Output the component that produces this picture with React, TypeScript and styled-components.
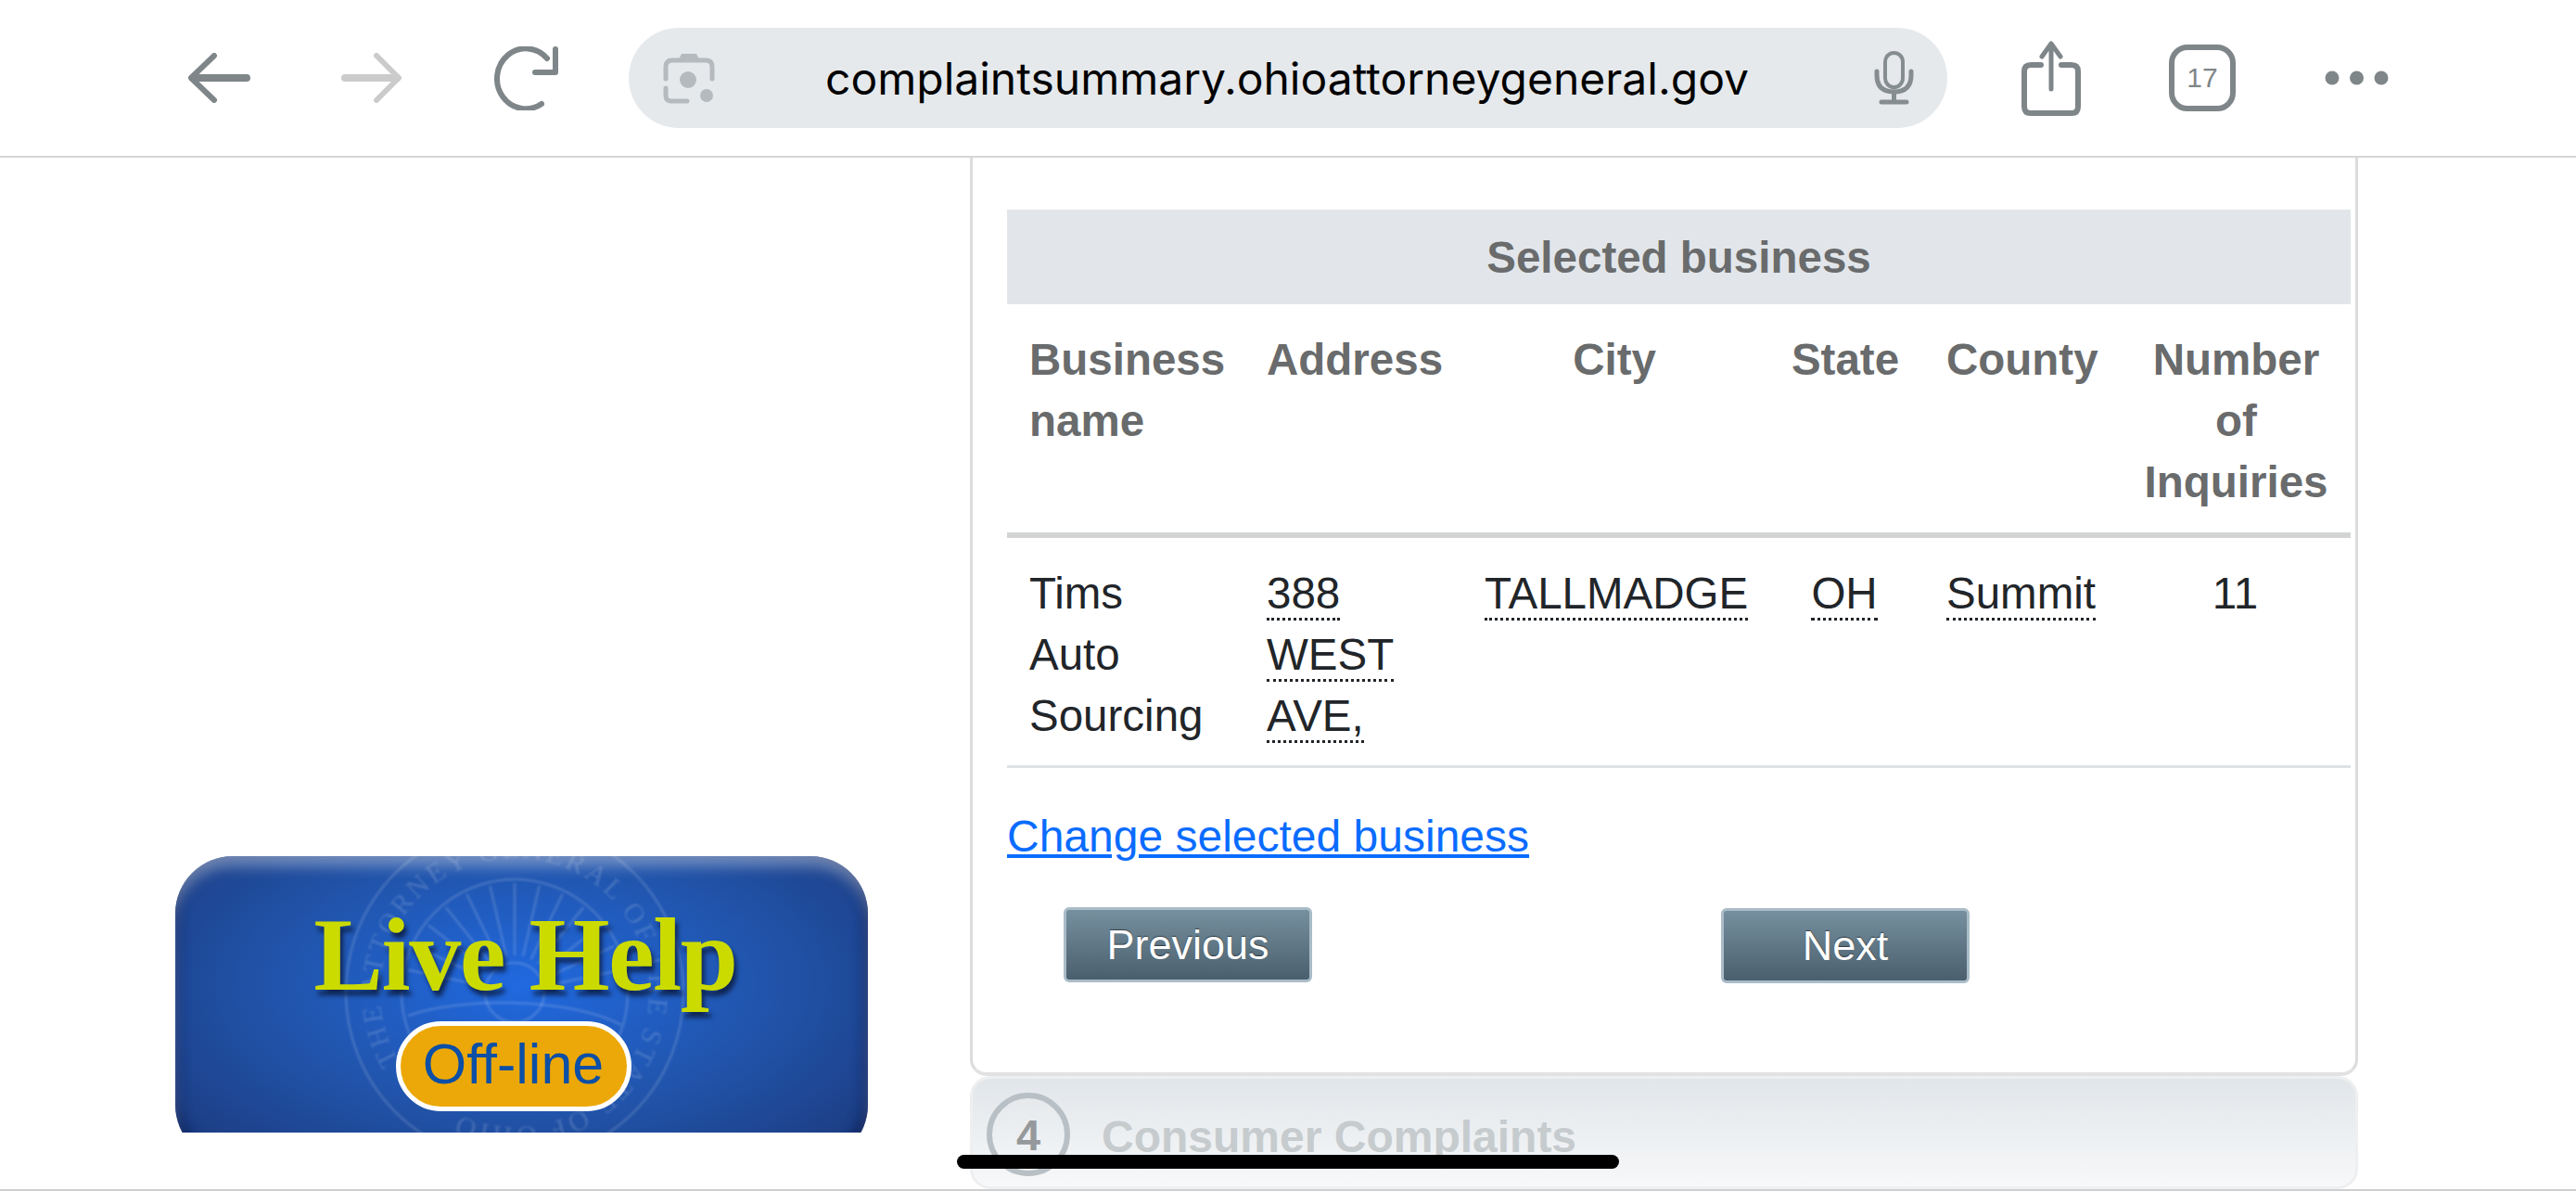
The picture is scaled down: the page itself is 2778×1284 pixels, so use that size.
import * as React from "react";
import styled, { createGlobalStyle } from "styled-components";

const GlobalStyle = createGlobalStyle`
  html, body {
    margin: 0;
    height: 1284px;
    overflow: hidden;
    background: #fff;
    font-family: "Liberation Sans", Arial, sans-serif;
    color: #212529;
  }
`;

const Screen = styled.div`
  position: relative;
  width: 2778px;
  height: 1284px;
  box-sizing: border-box;
  overflow: hidden;
  display: flex;
  flex-direction: column;
  border-bottom: 2px solid #cfcfcf;
`;

const Toolbar = styled.div`
  height: 168px;
  flex: none;
  display: flex;
  align-items: center;
  padding-left: 202px;
  border-bottom: 2px solid #d6d6d6;
`;

const ToolIcon = styled.svg<{ $gap?: number }>`
  flex: none;
  margin-left: ${p => p.$gap || 0}px;
  display: block;
`;

const AddressBar = styled.div`
  width: 1422px;
  height: 108px;
  margin-left: 76px;
  flex: none;
  box-sizing: border-box;
  padding: 0 36px 0 37px;
  border-radius: 54px;
  background: #e6e9ec;
  display: flex;
  align-items: center;
`;

const Url = styled.div`
  flex: 1;
  padding-right: 16px;
  text-align: center;
  font-family: Inter, "Liberation Sans", sans-serif;
  font-size: 48px;
  color: #000;
  white-space: nowrap;
`;

const TabCount = styled.div`
  width: 72px;
  height: 72px;
  margin-left: 95px;
  flex: none;
  box-sizing: border-box;
  border: 6px solid #7f8689;
  border-radius: 20px;
  display: flex;
  align-items: center;
  justify-content: center;
  font-size: 30px;
  color: #7f8689;
`;

const Content = styled.div`
  flex: 1;
  display: flex;
  min-height: 0;
`;

const Side = styled.div`
  width: 1046px;
  flex: none;
  box-sizing: border-box;
  padding: 753px 0 0 189px;
`;

const BannerClip = styled.div`
  width: 747px;
  height: 298px;
  overflow: hidden;
`;

const Banner = styled.div`
  position: relative;
  width: 747px;
  height: 330px;
  border-radius: 62px;
  overflow: hidden;
  background: radial-gradient(ellipse 62% 72% at 50% 42%, #2069e0 0%, #2155ad 55%, #1d3f86 100%);
  box-shadow: inset 0 14px 16px -4px rgba(255, 255, 255, 0.4), inset 0 -10px 14px rgba(10, 25, 80, 0.55),
    inset 10px 0 14px -6px rgba(10, 25, 80, 0.3), inset -10px 0 14px -6px rgba(10, 25, 80, 0.5);
  display: flex;
  flex-direction: column;
  align-items: center;
`;

const Seal = styled.svg`
  position: absolute;
  left: 176px;
  top: -43px;
  filter: blur(0.8px);
`;

const LiveHelp = styled.div`
  position: relative;
  margin-top: 40px;
  padding-left: 8px;
  font-family: "Liberation Serif", serif;
  font-weight: 700;
  font-size: 112px;
  letter-spacing: -1.5px;
  line-height: 132px;
  color: #cbdb00;
  text-shadow: 3px 6px 5px rgba(10, 20, 50, 0.75);
  white-space: nowrap;
`;

const OffLine = styled.div`
  position: relative;
  margin: 6px 18px 0 0;
  width: 254px;
  height: 97px;
  box-sizing: border-box;
  padding-bottom: 5px;
  border: 5px solid #fff;
  border-radius: 49px;
  background: #eca808;
  color: #0b4fa6;
  font-size: 61px;
  display: flex;
  align-items: center;
  justify-content: center;
`;

const Main = styled.div`
  width: 1497px;
  flex: none;
  display: flex;
  flex-direction: column;
`;

const Panel = styled.div`
  height: 990px;
  flex: none;
  box-sizing: border-box;
  padding: 56px 5px 0 37px;
  background: #fff;
  border-left: 3px solid #dcdcdc;
  border-right: 3px solid #dcdcdc;
  border-bottom: 4px solid #e2e2e2;
  border-radius: 0 0 18px 18px;
`;

const BandTitle = styled.div`
  height: 102px;
  background: #e2e6ea;
  color: #696b6c;
  font-weight: 700;
  font-size: 47.5px;
  display: flex;
  align-items: center;
  justify-content: center;
`;

const Table = styled.table`
  width: 1449px;
  table-layout: fixed;
  border-collapse: collapse;
  font-size: 47.5px;
  line-height: 66px;
`;

const Th = styled.th<{ $w: number; $center?: boolean }>`
  width: ${p => p.$w}px;
  box-sizing: border-box;
  padding: 27px 24px 21px;
  color: #696b6c;
  font-weight: 700;
  text-align: ${p => (p.$center ? "center" : "left")};
  vertical-align: top;
  border-bottom: 6px solid #d2d4d5;
`;

const Td = styled.td<{ $center?: boolean }>`
  padding: 27px 26px 20px 24px;
  text-align: ${p => (p.$center ? "center" : "left")};
  vertical-align: top;
  border-bottom: 3px solid #dee2e6;
`;

const Abbr = styled.span`
  border-bottom: 3px dotted #212529;
`;

const ChangeLink = styled.a`
  display: block;
  margin-top: 41px;
  font-size: 48px;
  line-height: 66px;
  color: #0a6cff;
  text-decoration: underline;
`;

const Buttons = styled.div`
  display: flex;
  align-items: flex-start;
  gap: 441px;
  margin: 43px 0 0 61px;
`;

const NavButton = styled.button<{ $drop?: boolean }>`
  width: 268px;
  height: 81px;
  margin-top: ${p => (p.$drop ? 1 : 0)}px;
  box-sizing: border-box;
  border: 3px solid #a9bcc8;
  border-radius: 6px;
  background: linear-gradient(#76909f, #4a5f6d);
  color: #fff;
  font-family: "Liberation Sans", Arial, sans-serif;
  font-size: 45px;
  text-shadow: 0 -1px 1px rgba(0, 0, 0, 0.5);
  padding: 0;
`;

const NextStep = styled.div`
  flex: 1;
  display: flex;
  align-items: flex-start;
  gap: 34px;
  box-sizing: border-box;
  padding: 15px 0 0 15px;
  background: linear-gradient(#e1e6ea, #f7f8f9);
  border: 3px solid #eeeff0;
  border-radius: 22px;
`;

const StepCircle = styled.div`
  width: 90px;
  height: 90px;
  flex: none;
  box-sizing: border-box;
  border: 6px solid #b8c0c5;
  border-radius: 50%;
  display: flex;
  align-items: center;
  justify-content: center;
  color: #96999b;
  font-weight: 700;
  font-size: 47px;
`;

const StepName = styled.div`
  margin-top: 15px;
  color: #c6cbce;
  font-weight: 700;
  font-size: 48px;
  line-height: 66px;
`;

const HomeBar = styled.div`
  position: absolute;
  left: 1032px;
  top: 1245px;
  width: 714px;
  height: 15px;
  border-radius: 8px;
  background: #000;
`;

const gray = "#7f8689";
const rays = Array.from({ length: 13 }, (_, i) => -90 + (i - 6) * 13);

const App: React.FC = () => (
  <Screen>
    <GlobalStyle />
    <Toolbar>
      <ToolIcon width="68" height="54" viewBox="0 0 68 54" fill="none" stroke={gray} strokeLinecap="round" strokeLinejoin="round">
        <path d="M64 27H6" strokeWidth="8" />
        <path d="M29 3 4 27 29 51" strokeWidth="6" />
      </ToolIcon>
      <ToolIcon $gap={98} width="66" height="54" viewBox="0 0 66 54" fill="none" stroke="#cbcbcb" strokeLinecap="round" strokeLinejoin="round">
        <path d="M4 27H60" strokeWidth="8" />
        <path d="M38 3 62 27 38 51" strokeWidth="6" />
      </ToolIcon>
      <ToolIcon $gap={99} width="69" height="69" viewBox="0 0 69 69" fill="none" stroke={gray} strokeLinecap="round">
        <path d="M57 13A31 32.5 0 1 0 51 62" strokeWidth="6" />
        <path d="M66 3V28H44" strokeWidth="6" strokeLinejoin="round" />
      </ToolIcon>
      <AddressBar>
        <svg width="56" height="55" viewBox="0 0 56 55" fill="none" stroke="#b5babe" strokeWidth="5" strokeLinecap="round">
          <path d="M3 28V15Q3 8 10 8H46Q53 8 53 15V28" />
          <path d="M3 38V46Q3 52 9 52H26" />
          <path d="M17 7 20 1H36L39 7Z" fill="#b5babe" stroke="none" />
          <circle cx="27" cy="29" r="9" fill="#b5babe" stroke="none" />
          <circle cx="47" cy="46" r="7" fill="#b5babe" stroke="none" />
        </svg>
        <Url>complaintsummary.ohioattorneygeneral.gov</Url>
        <svg width="43" height="58" viewBox="0 0 43 58" fill="none" stroke="#868d90" strokeWidth="4" strokeLinecap="round">
          <rect x="12" y="2" width="19" height="37" rx="9.5" />
          <path d="M3 22V26Q3 44 21.5 44T40 26V22" strokeWidth="5" />
          <path d="M21.5 44V55M8 55H35" strokeWidth="5" />
        </svg>
      </AddressBar>
      <ToolIcon $gap={80} width="64" height="81" viewBox="0 0 64 81" fill="none" stroke={gray} strokeLinecap="round">
        <path d="M21 26H10Q3 26 3 33V71Q3 78 10 78H54Q61 78 61 71V33Q61 26 54 26H43" strokeWidth="6" />
        <path d="M32 52V4M22 17 32 3 42 17" strokeWidth="5" strokeLinejoin="round" />
      </ToolIcon>
      <TabCount>17</TabCount>
      <ToolIcon $gap={96} width="69" height="16" viewBox="0 0 69 16" fill={gray}>
        <circle cx="8" cy="8" r="7.5" />
        <circle cx="34.5" cy="8" r="7.5" />
        <circle cx="61" cy="8" r="7.5" />
      </ToolIcon>
    </Toolbar>
    <Content>
      <Side>
        <BannerClip>
          <Banner>
            <Seal width="380" height="380" viewBox="0 0 380 380" fill="none" stroke="#fff" strokeOpacity="0.14" strokeWidth="3">
              <defs>
                <path id="sealRing" d="M190 190m-145 0a145 145 0 1 1 290 0a145 145 0 1 1-290 0" />
              </defs>
              <circle cx="190" cy="190" r="182" />
              <circle cx="190" cy="190" r="122" />
              <path d="M75 215C130 195 250 195 305 225" />
              <path d="M80 232C140 215 240 222 300 242" />
              <circle cx="190" cy="190" r="32" />
              {rays.map(a => (
                <path
                  key={a}
                  d={`M${190 + 40 * Math.cos((a * Math.PI) / 180)} ${190 + 40 * Math.sin((a * Math.PI) / 180)}L${190 + 118 * Math.cos((a * Math.PI) / 180)} ${190 + 118 * Math.sin((a * Math.PI) / 180)}`}
                />
              ))}
              <text fill="#fff" fillOpacity="0.16" stroke="none" fontFamily="Liberation Serif, serif" fontSize="30" letterSpacing="3" transform="rotate(-38 190 190)">
                <textPath href="#sealRing" startOffset="2%">
                  THE ATTORNEY GENERAL OF THE STATE OF OHIO
                </textPath>
              </text>
            </Seal>
            <LiveHelp>Live Help</LiveHelp>
            <OffLine>Off-line</OffLine>
          </Banner>
        </BannerClip>
      </Side>
      <Main>
        <Panel>
          <BandTitle>Selected business</BandTitle>
          <Table>
            <thead>
              <tr>
                <Th $w={256}>Business name</Th>
                <Th $w={235}>Address</Th>
                <Th $w={328} $center>City</Th>
                <Th $w={170} $center>State</Th>
                <Th $w={213}>County</Th>
                <Th $w={247} $center>Number of Inquiries</Th>
              </tr>
            </thead>
            <tbody>
              <tr>
                <Td>Tims Auto Sourcing</Td>
                <Td><Abbr>388 WEST AVE,</Abbr></Td>
                <Td $center><Abbr>TALLMADGE</Abbr></Td>
                <Td $center><Abbr>OH</Abbr></Td>
                <Td><Abbr>Summit</Abbr></Td>
                <Td $center>11</Td>
              </tr>
            </tbody>
          </Table>
          <ChangeLink href="#">Change selected business</ChangeLink>
          <Buttons>
            <NavButton>Previous</NavButton>
            <NavButton $drop>Next</NavButton>
          </Buttons>
        </Panel>
        <NextStep>
          <StepCircle>4</StepCircle>
          <StepName>Consumer Complaints</StepName>
        </NextStep>
      </Main>
    </Content>
    <HomeBar />
  </Screen>
);

export default App;
